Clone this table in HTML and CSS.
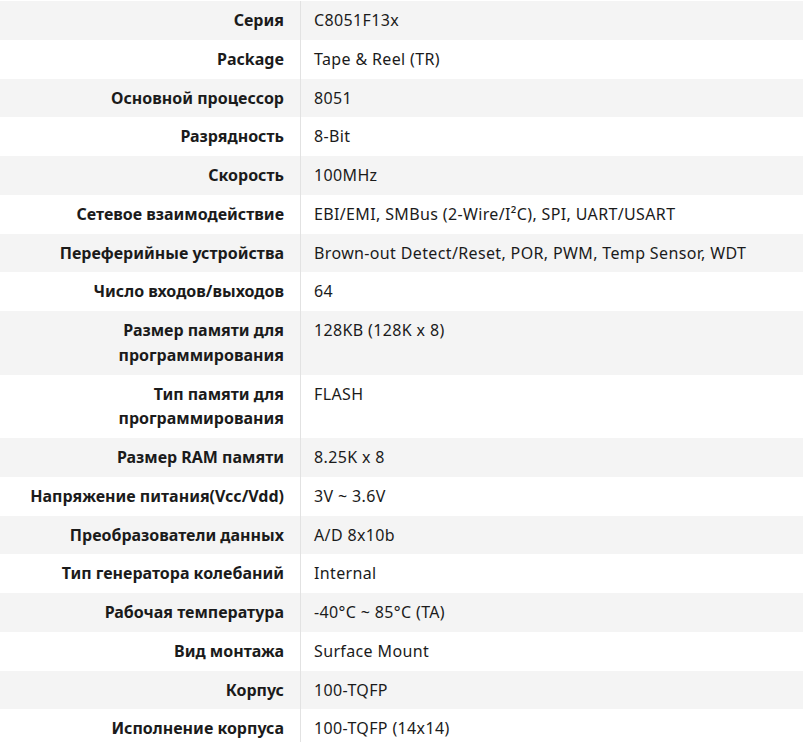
FILE: index.html
```html
<!DOCTYPE html>
<html lang="ru">
<head>
<meta charset="utf-8">
<link rel="stylesheet" href="styles.css">
</head>
<body>
<table class="specs">
<tbody>
<tr><th>Серия</th><td>C8051F13x</td></tr>
<tr><th>Package</th><td>Tape &amp; Reel (TR)</td></tr>
<tr><th>Основной процессор</th><td>8051</td></tr>
<tr><th>Разрядность</th><td>8-Bit</td></tr>
<tr><th>Скорость</th><td>100MHz</td></tr>
<tr><th>Сетевое взаимодействие</th><td>EBI/EMI, SMBus (2-Wire/I²C), SPI, UART/USART</td></tr>
<tr><th>Переферийные устройства</th><td>Brown-out Detect/Reset, POR, PWM, Temp Sensor, WDT</td></tr>
<tr><th>Число входов/выходов</th><td>64</td></tr>
<tr><th>Размер памяти для программирования</th><td>128KB (128K x 8)</td></tr>
<tr><th>Тип памяти для программирования</th><td>FLASH</td></tr>
<tr><th>Размер RAM памяти</th><td>8.25K x 8</td></tr>
<tr><th>Напряжение питания(Vcc/Vdd)</th><td>3V ~ 3.6V</td></tr>
<tr><th>Преобразователи данных</th><td>A/D 8x10b</td></tr>
<tr><th>Тип генератора колебаний</th><td>Internal</td></tr>
<tr><th>Рабочая температура</th><td>-40°C ~ 85°C (TA)</td></tr>
<tr><th>Вид монтажа</th><td>Surface Mount</td></tr>
<tr><th>Корпус</th><td>100-TQFP</td></tr>
<tr><th>Исполнение корпуса</th><td>100-TQFP (14x14)</td></tr>
</tbody>
</table>
</body>
</html>
```

FILE: styles.css
```css
html, body {
  margin: 0;
  padding: 0;
  background: #ffffff;
}
body {
  font-family: "Noto Sans", "Open Sans", sans-serif;
  font-size: 16px;
  color: #1b1b1b;
  padding-top: 1px;
}
.specs {
  width: 803px;
  border-collapse: collapse;
  border-spacing: 0;
}
.specs tr:nth-child(odd) {
  background: #f4f4f4;
}
.specs th,
.specs td {
  padding: 7px 16px 7px 13px;
  line-height: 24.75px;
  vertical-align: top;
}
.specs th {
  width: 270px;
  text-align: right;
  font-weight: 700;
  padding-left: 14px;
  padding-right: 16px;
}
.specs td {
  text-align: left;
  font-weight: 400;
  letter-spacing: 0.36px;
  border-left: 1px solid #e2e2e2;
}
```
